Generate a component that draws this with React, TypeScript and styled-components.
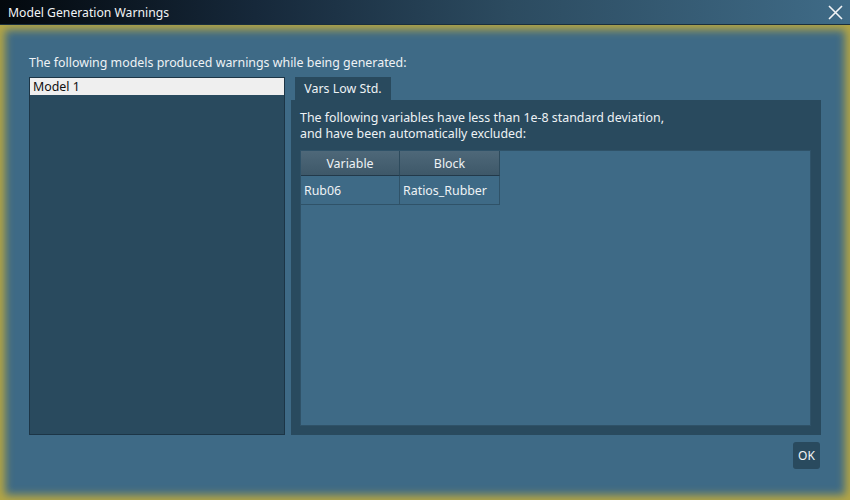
import React from 'react'
import styled, { createGlobalStyle } from 'styled-components'

const GlobalStyle = createGlobalStyle`
  html, body {
    margin: 0;
    padding: 0;
    background: #3e6a86;
  }
  body {
    font-family: 'Noto Sans', 'Open Sans', sans-serif;
    font-size: 12.4px;
    color: #eef2f5;
  }
`

const Window = styled.div`
  width: 850px;
  height: 500px;
  display: flex;
  flex-direction: column;
  overflow: hidden;
`

const TitleBar = styled.div`
  height: 24px;
  flex: 0 0 24px;
  display: flex;
  align-items: center;
  justify-content: space-between;
  padding: 0 8px;
  background: linear-gradient(to right, #03080d 0%, #16283a 30%, #2c4b60 60%, #3f6b87 100%);
  border-bottom: 1px solid #1b2f3d;
  box-sizing: content-box;
`

const Title = styled.span`
  color: #f2f4f6;
  font-size: 12.2px;
`

const CloseButton = styled.button`
  border: 0;
  background: none;
  padding: 0;
  margin-right: -1px;
  width: 16px;
  height: 16px;
  display: flex;
  align-items: center;
  justify-content: center;
  cursor: pointer;
`

const Frame = styled.div`
  flex: 1;
  background: #3e6a86;
  box-shadow: inset 0 0 9px 5px #b5a644;
  padding: 29px 29px 31px 29px;
  display: flex;
  flex-direction: column;
  min-height: 0;
`

const Prompt = styled.div`
  line-height: 17px;
  margin-bottom: 6px;
`

const Row = styled.div`
  display: flex;
  gap: 6px;
  height: 358px;
`

const ListBox = styled.div`
  width: 256px;
  box-sizing: border-box;
  background: #294a5e;
  border: 1px solid #1c3546;
`

const ListItem = styled.div<{ $selected?: boolean }>`
  height: 17px;
  line-height: 17px;
  padding: 0 3px;
  background: ${(p) => (p.$selected ? '#efefef' : 'transparent')};
  color: ${(p) => (p.$selected ? '#101010' : '#eef2f5')};
`

const TabArea = styled.div`
  flex: 1;
  display: flex;
  flex-direction: column;
`

const TabStrip = styled.div`
  display: flex;
  padding-left: 4px;
  height: 23px;
`

const Tab = styled.div`
  width: 96px;
  background: #294a5e;
  display: flex;
  align-items: center;
  justify-content: center;
`

const TabPanel = styled.div`
  flex: 1;
  background: #294a5e;
  padding: 10px 10px 9px 9px;
  display: flex;
  flex-direction: column;
`

const Desc = styled.div`
  line-height: 16px;
  margin-bottom: 8px;
`

const TableBox = styled.div`
  flex: 1;
  background: #3e6a86;
  border: 1px solid #2f5268;
`

const Table = styled.div`
  display: grid;
  grid-template-columns: 99px 100px;
`

const HeaderCell = styled.div`
  height: 24px;
  display: flex;
  align-items: center;
  justify-content: center;
  background: linear-gradient(to bottom, #4e6879, #3e5869);
  border-right: 1px solid #2d4a5c;
  border-bottom: 1px solid #22394a;
`

const Cell = styled.div`
  height: 28px;
  display: flex;
  align-items: center;
  padding-left: 3px;
  border-right: 1px solid #2f5268;
  border-bottom: 1px solid #2f5268;
`

const Footer = styled.div`
  display: flex;
  justify-content: flex-end;
  margin-top: 7px;
  padding-right: 1px;
`

const OkButton = styled.button`
  width: 27px;
  height: 27px;
  border: 0;
  border-radius: 3px;
  background: #294a5e;
  color: #f2f4f6;
  font-family: inherit;
  font-size: 12px;
  padding: 0;
`

export default function App() {
  return (
    <>
      <GlobalStyle />
      <Window>
        <TitleBar>
          <Title>Model Generation Warnings</Title>
          <CloseButton aria-label="Close">
            <svg width="15" height="15" viewBox="0 0 15 15">
              <path d="M1 1 L14 14 M14 1 L1 14" stroke="#f2f4f6" strokeWidth="1.6" />
            </svg>
          </CloseButton>
        </TitleBar>
        <Frame>
          <Prompt>The following models produced warnings while being generated:</Prompt>
          <Row>
            <ListBox>
              <ListItem $selected>Model 1</ListItem>
            </ListBox>
            <TabArea>
              <TabStrip>
                <Tab>Vars Low Std.</Tab>
              </TabStrip>
              <TabPanel>
                <Desc>
                  The following variables have less than 1e-8 standard deviation,
                  <br />
                  and have been automatically excluded:
                </Desc>
                <TableBox>
                  <Table>
                    <HeaderCell>Variable</HeaderCell>
                    <HeaderCell>Block</HeaderCell>
                    <Cell>Rub06</Cell>
                    <Cell>Ratios_Rubber</Cell>
                  </Table>
                </TableBox>
              </TabPanel>
            </TabArea>
          </Row>
          <Footer>
            <OkButton>OK</OkButton>
          </Footer>
        </Frame>
      </Window>
    </>
  )
}
